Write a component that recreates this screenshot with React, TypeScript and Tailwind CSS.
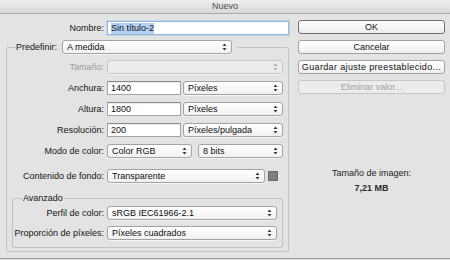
import React from "react";

const font = { fontFamily: '"Liberation Sans", Arial, sans-serif' };

const Arrows = ({ faint = false }: { faint?: boolean }) => (
	<svg width="5" height="8" viewBox="0 0 5 8" className="shrink-0">
		<path d="M2.5 0.5 L4.5 3 L0.5 3 Z M0.5 5 L4.5 5 L2.5 7.5 Z" fill={faint ? "#a8a8a8" : "#3a3a3a"} />
	</svg>
);

const Select = ({
	value,
	width,
	disabled = false,
}: {
	value: string;
	width: string;
	disabled?: boolean;
}) => (
	<div
		className={`${width} h-[14px] flex items-center justify-between pl-[4px] pr-[4px] rounded-[3px] border shadow-[0_1px_0_rgba(255,255,255,0.6)] ${
			disabled
				? "border-[#c4c4c4] bg-[#ececec]"
				: "border-[#a3a3a3] bg-gradient-to-b from-[#ffffff] to-[#f1f1f1]"
		}`}
	>
		<span className="text-[9px] leading-none text-[#0e0e0e] truncate">{value}</span>
		<Arrows faint={disabled} />
	</div>
);

const Input = ({ value, width }: { value: string; width: string }) => (
	<div
		className={`${width} h-[14px] flex items-center pl-[3px] bg-white border border-[#a5a5a5] border-t-[#8a8a8a] shadow-[inset_0_1px_1px_rgba(0,0,0,0.08)]`}
	>
		<span className="text-[9px] leading-none text-[#0e0e0e]">{value}</span>
	</div>
);

const Label = ({
	text,
	width,
	disabled = false,
}: {
	text: string;
	width: string;
	disabled?: boolean;
}) => (
	<span
		className={`${width} shrink-0 text-right text-[9px] leading-none pr-[3px] ${
			disabled ? "text-[#9c9c9c]" : "text-[#141414]"
		}`}
	>
		{text}
	</span>
);

const Button = ({
	text,
	primary = false,
	disabled = false,
	wide = false,
}: {
	text: string;
	primary?: boolean;
	disabled?: boolean;
	wide?: boolean;
}) => (
	<div
		className={`h-[14px] flex items-center justify-center rounded-[3px] border text-[9px] leading-none ${
			primary
				? "border-[#6f6f6f] bg-gradient-to-b from-[#ffffff] to-[#ececec]"
				: disabled
					? "border-[#c6c6c6] bg-[#ececec] text-[#a2a2a2]"
					: "border-[#a2a2a2] bg-gradient-to-b from-[#ffffff] to-[#efefef]"
		} ${disabled ? "" : "text-[#121212]"} ${wide ? "tracking-[0.35px]" : ""}`}
	>
		{text}
	</div>
);

export default function App() {
	return (
		<div className="w-[450px] h-[260px] overflow-hidden bg-[#e3e3e3] flex flex-col" style={font}>
			{/* title bar */}
			<div className="h-[14px] shrink-0 flex items-center justify-center border-b border-[#a9a9a9] bg-gradient-to-b from-[#efefef] to-[#d8d8d8]">
				<span className="text-[9px] leading-none text-[#4a4a4a]">Nuevo</span>
			</div>

			<div className="h-[244px] shrink-0 flex">
				{/* left column */}
				<div className="w-[289px] shrink-0 flex flex-col">
					<div className="mt-[7px] flex items-center">
						<Label text="Nombre:" width="w-[107px]" />
						<div className="w-[182px] h-[14px] flex items-center pl-[3px] bg-white border border-[#93b6dd] shadow-[0_0_0_1px_rgba(140,180,230,0.35)]">
							<span className="text-[9px] leading-[11px] text-[#0e0e0e] bg-[#b4d2f4]">Sin título-2</span>
						</div>
					</div>

					<fieldset className="mt-[5px] ml-[6px] w-[283px] border border-[#c2c2c2] rounded-[2px] pb-[3px]">
						<legend className="ml-[9px] pr-[5px] flex items-center">
							<span className="text-[9px] leading-none text-[#141414] w-[46px]">Predefinir:</span>
							<Select value="A medida" width="w-[170px]" />
						</legend>

						<div className="mt-[6px] flex flex-col gap-[7px]">
							<div className="flex items-center">
								<Label text="Tamaño:" width="w-[100px]" disabled />
								<Select value="" width="w-[176px]" disabled />
							</div>
							<div className="flex items-center">
								<Label text="Anchura:" width="w-[100px]" />
								<Input value="1400" width="w-[74px]" />
								<div className="ml-[2px]">
									<Select value="Píxeles" width="w-[100px]" />
								</div>
							</div>
							<div className="flex items-center">
								<Label text="Altura:" width="w-[100px]" />
								<Input value="1800" width="w-[74px]" />
								<div className="ml-[2px]">
									<Select value="Píxeles" width="w-[100px]" />
								</div>
							</div>
							<div className="flex items-center">
								<Label text="Resolución:" width="w-[100px]" />
								<Input value="200" width="w-[74px]" />
								<div className="ml-[2px]">
									<Select value="Píxeles/pulgada" width="w-[100px]" />
								</div>
							</div>
							<div className="flex items-center">
								<Label text="Modo de color:" width="w-[100px]" />
								<Select value="Color RGB" width="w-[85px]" />
								<div className="ml-[6px]">
									<Select value="8 bits" width="w-[85px]" />
								</div>
							</div>
						</div>

						<div className="mt-[11px] flex items-center">
							<Label text="Contenido de fondo:" width="w-[100px]" />
							<Select value="Transparente" width="w-[158px]" />
							<div className="ml-[3px] w-[10px] h-[10px] bg-[#7f7f7f] border border-[#6a6a6a]" />
						</div>

						<fieldset className="mt-[10px] ml-[5px] w-[271px] border border-[#c2c2c2] rounded-[2px] pb-[7px]">
							<legend className="ml-[9px] px-[1px] text-[9px] leading-[10px] text-[#141414]">Avanzado</legend>
							<div className="mt-[3px] flex flex-col gap-[6px]">
								<div className="flex items-center">
									<Label text="Perfil de color:" width="w-[94px]" />
									<Select value="sRGB IEC61966-2.1" width="w-[170px]" />
								</div>
								<div className="flex items-center">
									<Label text="Proporción de píxeles:" width="w-[94px]" />
									<Select value="Píxeles cuadrados" width="w-[170px]" />
								</div>
							</div>
						</fieldset>
					</fieldset>
				</div>

				{/* right column */}
				<div className="ml-[9px] w-[147px] shrink-0 flex flex-col pt-[6px]">
					<div className="flex flex-col gap-[6px]">
						<Button text="OK" primary />
						<Button text="Cancelar" />
						<Button text="Guardar ajuste preestablecido..." wide />
						<Button text="Eliminar valor..." disabled />
					</div>
					<div className="mt-[72px] flex flex-col items-center text-[9px] text-[#1c1c1c]">
						<span className="leading-[15px]">Tamaño de imagen:</span>
						<span className="leading-[15px] font-bold text-[#2a2a2a]">7,21 MB</span>
					</div>
				</div>
			</div>

			<div className="flex-1 border-t border-[#9c9c9c] bg-[#e0e0e0]" />
		</div>
	);
}
